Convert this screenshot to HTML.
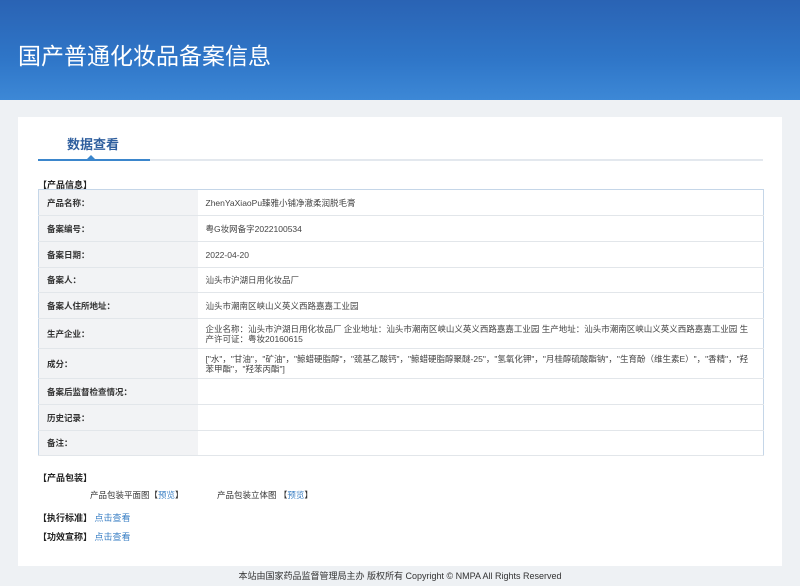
<!DOCTYPE html>
<html><head><meta charset="utf-8"><style>
*{margin:0;padding:0;box-sizing:border-box}
body{width:800px;height:584px;overflow:hidden;background:#eef1f4;font-family:"Liberation Sans","Noto Sans CJK SC",sans-serif;color:#333;font-size:9px;position:relative}
.hd{position:absolute;left:0;top:0;width:800px;height:100px;background:linear-gradient(180deg,#2a63b4 0%,#2f76c8 60%,#3d88d6 100%)}
.hd h1{position:absolute;left:18px;top:37px;font-size:23px;font-weight:normal;color:#fff;letter-spacing:0px}
.card{position:absolute;left:18px;top:117px;width:764px;height:449px;background:#fff}
.tab{position:absolute;left:49px;top:17px;font-size:13px;font-weight:bold;color:#2f5f9e}
.line{position:absolute;left:20px;top:42px;width:725px;height:2px;background:#e3e8ee}
.line b{position:absolute;left:0;top:0;width:112px;height:2px;background:#3b86cc}
.line i{position:absolute;left:49px;top:-4px;border:4px solid transparent;border-bottom-color:#3b86cc;border-top:0}
.sec{position:absolute;font-weight:bold;font-size:9px;color:#222}
table{position:absolute;left:20px;top:72px;width:726px;border-collapse:collapse;border:1px solid #c5d6e8}
td{border-bottom:1px solid #e2e6ea;padding:0 8px;font-size:8.5px;line-height:10px;vertical-align:middle}
td.l{width:159px;background:#f2f3f5;font-weight:bold;color:#333}
td.v{color:#444}
a{color:#3a7fc4;text-decoration:none}
.ft{position:absolute;left:0;top:566px;width:800px;height:18px;background:#eef1f4;text-align:center;font-size:9px;line-height:20px;color:#333}
</style></head><body>
<div class="hd"><h1>国产普通化妆品备案信息</h1></div>
<div class="card">
<div class="tab">数据查看</div>
<div class="line"><b></b><i></i></div>
<div class="sec" style="left:20px;top:61px">【产品信息】</div>
<table>
<tr style="height:26px"><td class="l">产品名称：</td><td class="v">ZhenYaXiaoPu臻雅小铺净澈柔润脱毛膏</td></tr>
<tr style="height:26px"><td class="l">备案编号：</td><td class="v">粤G妆网备字2022100534</td></tr>
<tr style="height:26px"><td class="l">备案日期：</td><td class="v">2022-04-20</td></tr>
<tr style="height:25px"><td class="l">备案人：</td><td class="v">汕头市沪湖日用化妆品厂</td></tr>
<tr style="height:26px"><td class="l">备案人住所地址：</td><td class="v">汕头市潮南区峡山义英义西路嘉嘉工业园</td></tr>
<tr style="height:30px"><td class="l">生产企业：</td><td class="v">企业名称：汕头市沪湖日用化妆品厂 企业地址：汕头市潮南区峡山义英义西路嘉嘉工业园 生产地址：汕头市潮南区峡山义英义西路嘉嘉工业园 生产许可证：粤妆20160615</td></tr>
<tr style="height:30px"><td class="l">成分：</td><td class="v">["水"，"甘油"，"矿油"，"鲸蜡硬脂醇"，"巯基乙酸钙"，"鲸蜡硬脂醇聚醚-25"，"氢氧化钾"，"月桂醇硫酸酯钠"，"生育酚（维生素E）"，"香精"，"羟苯甲酯"，"羟苯丙酯"]</td></tr>
<tr style="height:26px"><td class="l">备案后监督检查情况：</td><td class="v"></td></tr>
<tr style="height:26px"><td class="l">历史记录：</td><td class="v"></td></tr>
<tr style="height:25px"><td class="l">备注：</td><td class="v"></td></tr>
</table>
<div class="sec" style="left:20px;top:354px">【产品包装】</div>
<div style="position:absolute;left:72px;top:372px;font-size:8.5px">产品包装平面图【<a>预览</a>】</div>
<div style="position:absolute;left:199px;top:372px;font-size:8.5px">产品包装立体图 【<a>预览</a>】</div>
<div class="sec" style="left:20px;top:394px">【执行标准】 <a style="font-weight:normal">点击查看</a></div>
<div class="sec" style="left:20px;top:413px">【功效宣称】 <a style="font-weight:normal">点击查看</a></div>
</div>
<div class="ft">本站由国家药品监督管理局主办 版权所有 Copyright © NMPA All Rights Reserved</div>
</body></html>
